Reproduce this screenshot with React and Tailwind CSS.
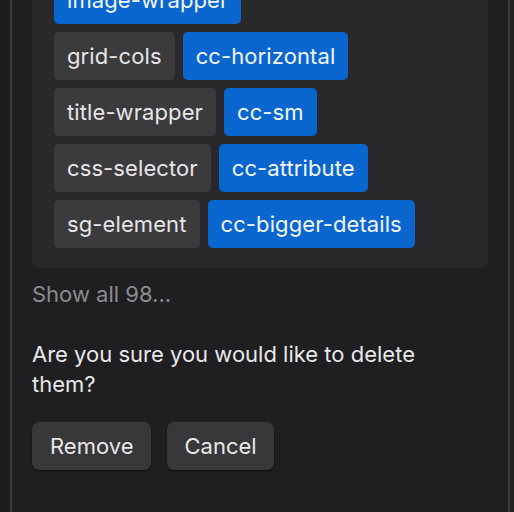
import React from "react";

const rows = [
  [["image-wrapper", "b"]],
  [["grid-cols", "g"], ["cc-horizontal", "b"]],
  [["title-wrapper", "g"], ["cc-sm", "b"]],
  [["css-selector", "g"], ["cc-attribute", "b"]],
  [["sg-element", "g"], ["cc-bigger-details", "b"]],
];

function Tag({ label, kind }) {
  return (
    <span
      className={
        "flex h-[48px] items-center rounded-[5px] px-[13px] text-[22px] leading-none tracking-[0.1px] " +
        (kind === "b" ? "bg-[#0a66cf] text-[#f2f6fc]" : "bg-[#3b3a3d] text-[#e6e6e7]")
      }
    >
      {label}
    </span>
  );
}

export default function App() {
  return (
    <div
      className="flex h-[512px] w-[514px] overflow-hidden bg-[#1c1b1d]"
      style={{ fontFamily: "Inter, 'Noto Sans', sans-serif" }}
    >
      <div className="w-[10px] shrink-0 bg-[#1c1b1d]" />
      <div className="w-[2px] shrink-0 bg-[#3a393b]" />
      <div className="flex w-[496px] shrink-0 flex-col bg-[#1f1e21] pl-[20px] pr-[20px]">
        <div className="-mt-[44px] flex flex-col gap-[8px] rounded-[7px] bg-[#29282b] pb-[20px] pl-[22px] pr-[22px] pt-[20px]">
          {rows.map((r, i) => (
            <div key={i} className="flex gap-[8px]">
              {r.map(([l, k]) => (
                <Tag key={l} label={l} kind={k} />
              ))}
            </div>
          ))}
        </div>
        <div className="mt-[11px] text-[22px] leading-[30px] text-[#8c8b8e]">Show all 98...</div>
        <div className="mt-[30px] max-w-[430px] text-[22px] leading-[30px] text-[#e8e8e9]">
          Are you sure you would like to delete them?
        </div>
        <div className="mt-[23px] flex gap-[16px]">
          <button className="h-[48px] rounded-[7px] bg-[#38373a] px-[18px] text-[22px] leading-none text-[#e8e8e9] shadow-[0_1px_2px_rgba(0,0,0,0.5)]">
            Remove
          </button>
          <button className="h-[48px] rounded-[7px] bg-[#38373a] px-[17px] text-[22px] leading-none text-[#e8e8e9] shadow-[0_1px_2px_rgba(0,0,0,0.5)]">
            Cancel
          </button>
        </div>
      </div>
      <div className="w-[2px] shrink-0 bg-[#3a393b]" />
      <div className="flex-1 bg-[#222124]" />
    </div>
  );
}
